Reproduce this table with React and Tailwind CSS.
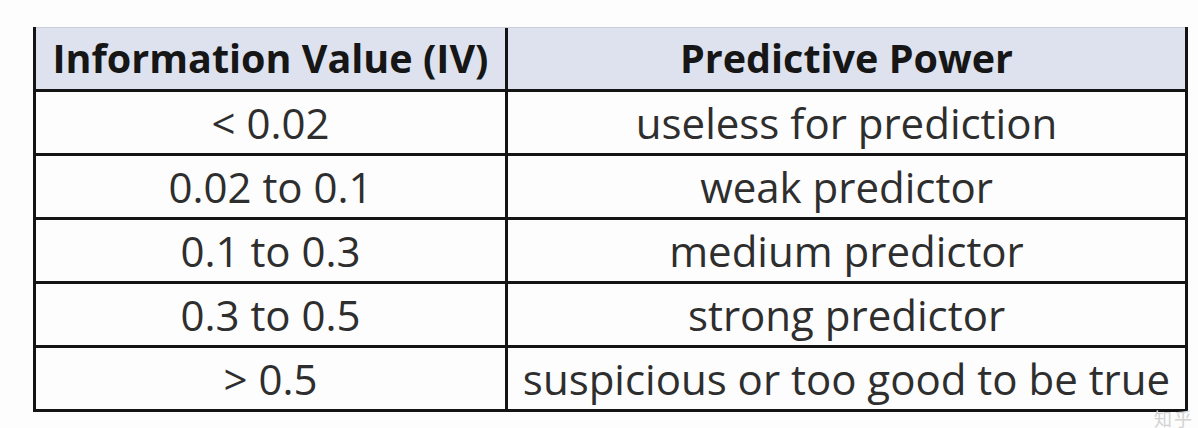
import React from 'react';

const ROWS = [
  ['< 0.02', 'useless for prediction'],
  ['0.02 to 0.1', 'weak predictor'],
  ['0.1 to 0.3', 'medium predictor'],
  ['0.3 to 0.5', 'strong predictor'],
  ['> 0.5', 'suspicious or too good to be true'],
];

export default function App() {
  return (
    <div className="relative w-[1198px] h-[428px] bg-[#fdfdfd] pt-[27px] pl-[33px] font-['Open_Sans','Liberation_Sans',sans-serif]">
      <div className="w-[1155px] border-x-[3px] border-[#141414]">
        <div className="flex h-[65px] bg-[#dde2ee] border-t border-[#c9ced8] border-b-[3px] border-b-[#141414] text-[#161616] font-bold text-[39.5px]">
          <div className="w-[472px] border-r-[3px] border-[#141414] flex items-center justify-center">
            Information Value (IV)
          </div>
          <div className="flex-1 flex items-center justify-center">Predictive Power</div>
        </div>
        {ROWS.map(([iv, power]) => (
          <div key={iv} className="flex h-[64px] border-b-[3px] border-[#141414] text-[#2e2e2e] text-[42px]">
            <div className="w-[472px] border-r-[3px] border-[#141414] flex items-center justify-center">{iv}</div>
            <div className="flex-1 flex items-center justify-center">{power}</div>
          </div>
        ))}
      </div>
      <div className="absolute right-[4px] bottom-[1px] leading-[18px] text-[18px] text-[#d2d2d2] font-['Noto_Sans_CJK_SC',sans-serif] tracking-[2px]">
        知乎
      </div>
    </div>
  );
}
